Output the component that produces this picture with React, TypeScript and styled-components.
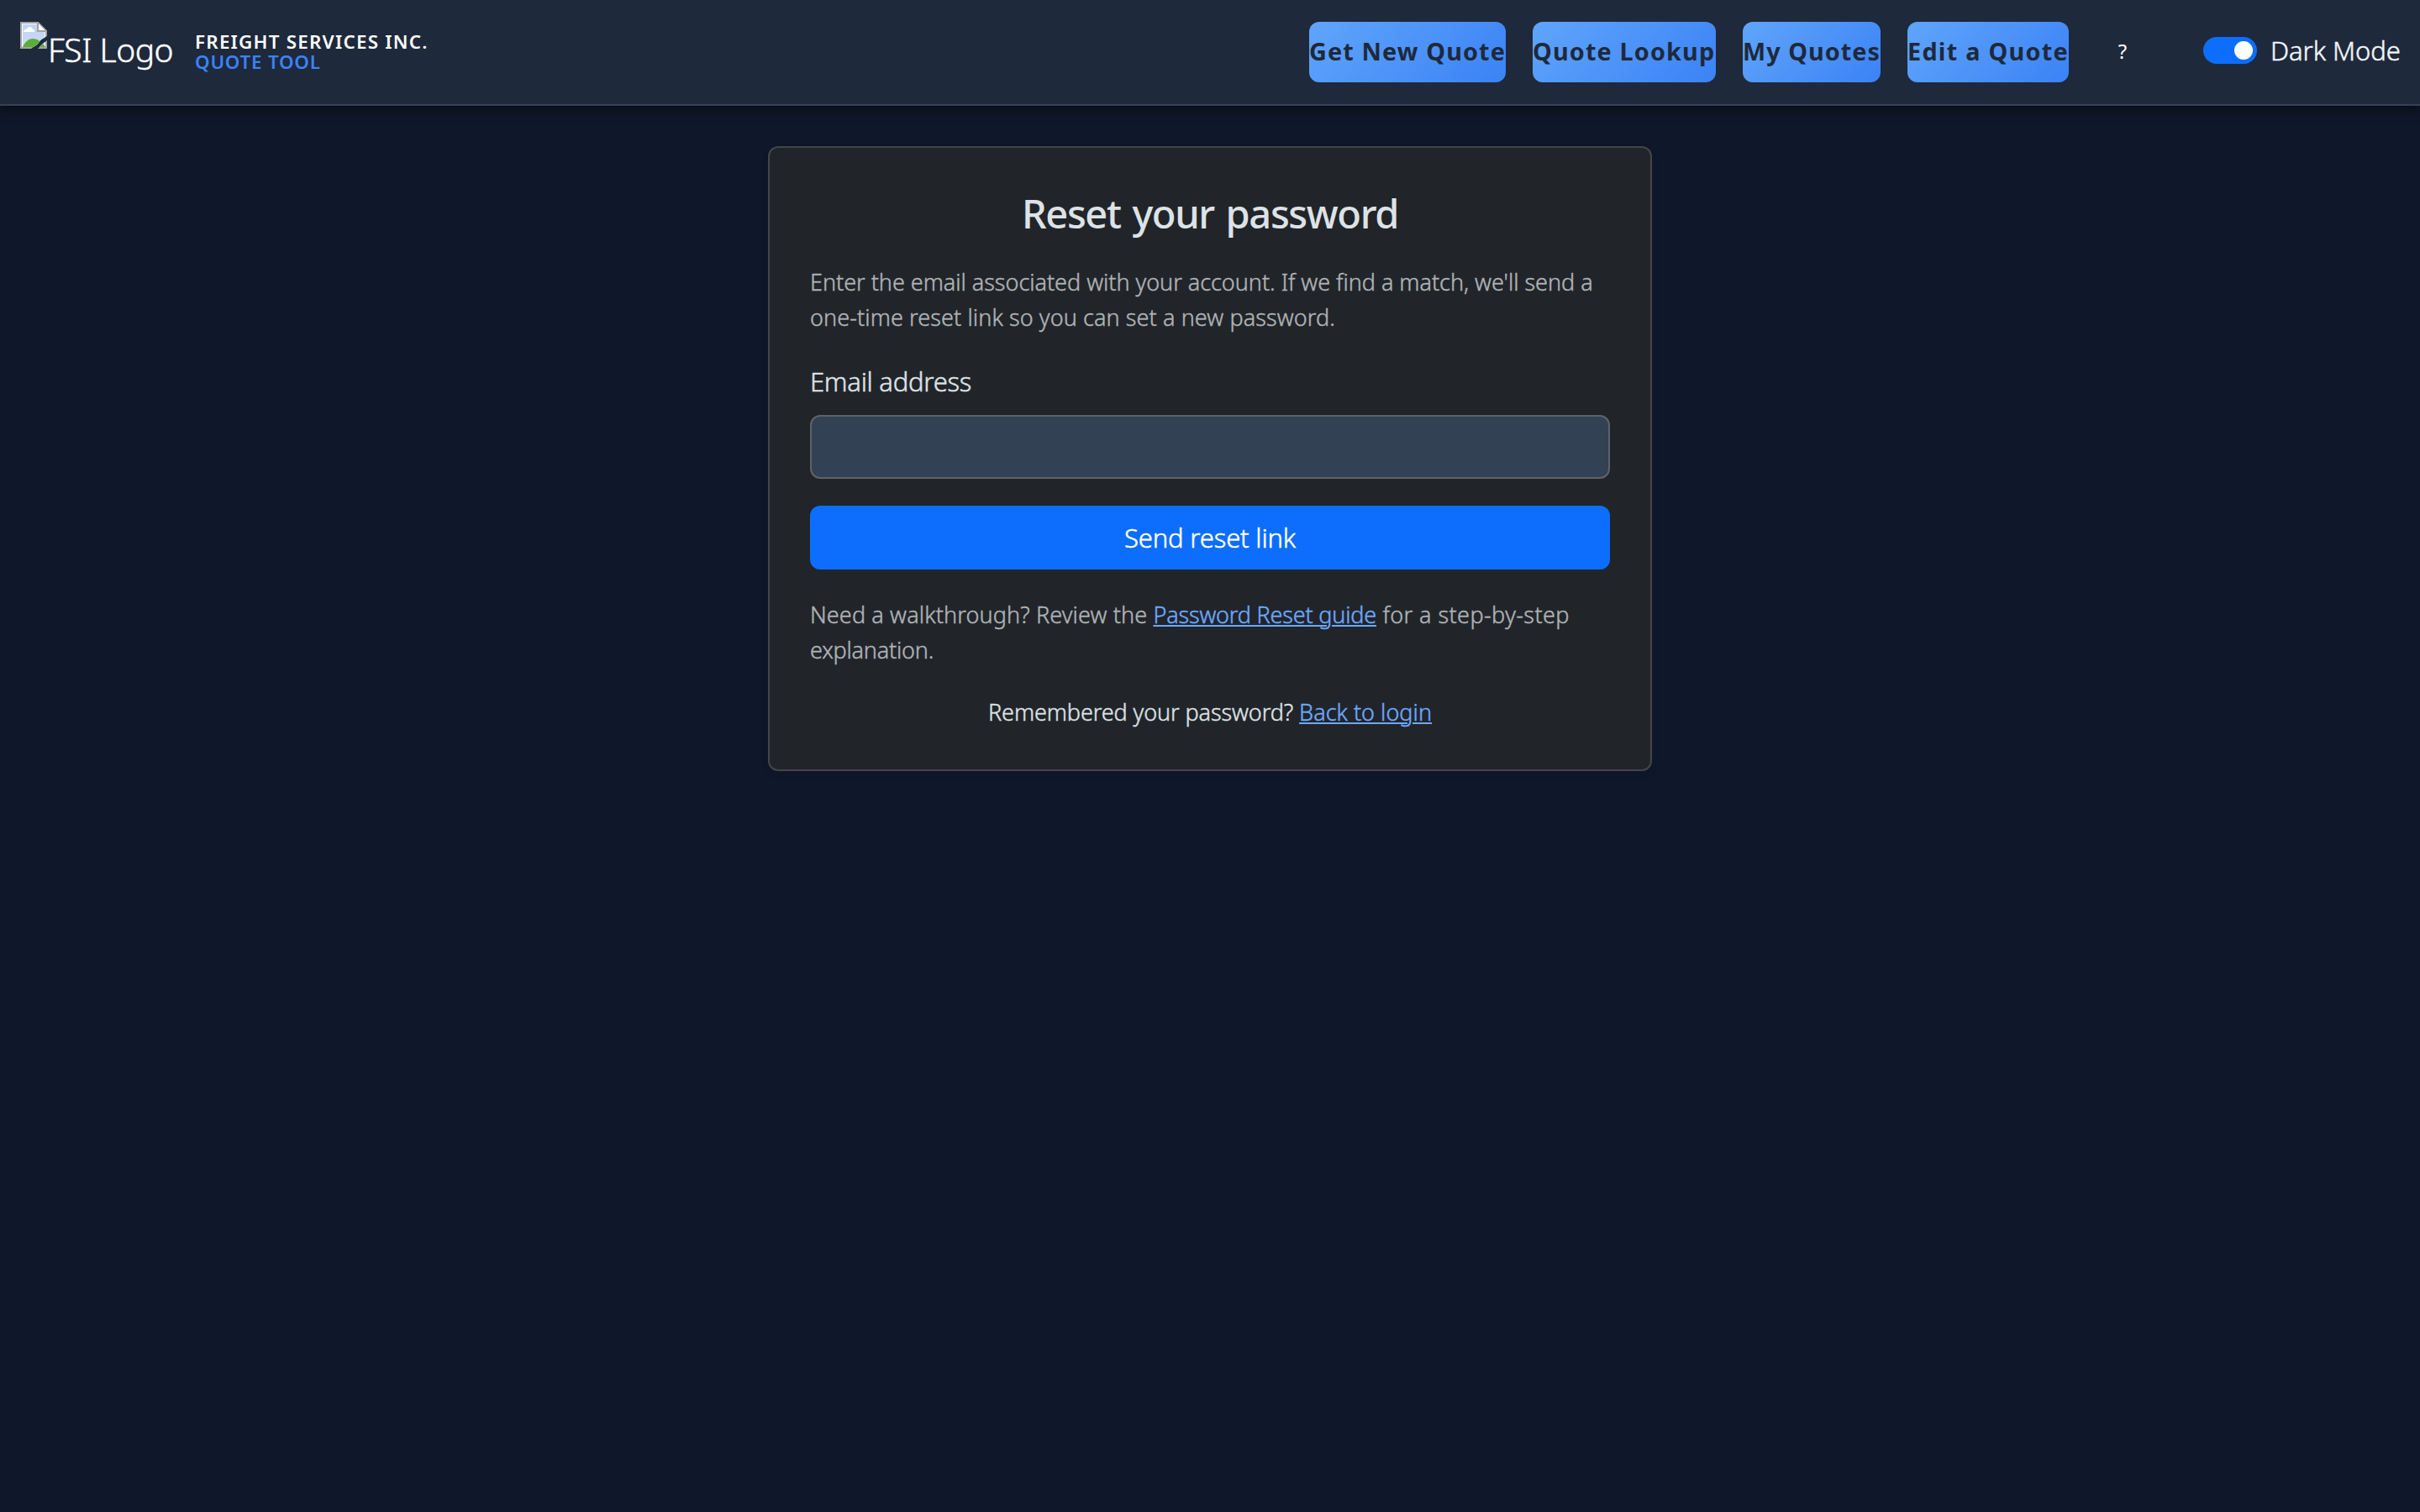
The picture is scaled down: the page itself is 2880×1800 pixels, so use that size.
import React from 'react';
import styled, { createGlobalStyle } from 'styled-components';

const GlobalStyle = createGlobalStyle`
  *, *::before, *::after { box-sizing: border-box; }
  body {
    margin: 0;
    min-height: 100vh;
    background: #0f172a;
    color: #dee2e6;
    font-family: "Noto Sans", "Open Sans", sans-serif;
    font-weight: 300;
    overflow: hidden;
  }
`;

const Header = styled.header`
  display: flex;
  align-items: flex-start;
  justify-content: space-between;
  height: 126px;
  padding: 26px 24px 0;
  background: #1e293b;
  border-bottom: 2px solid #334155;
  box-shadow: 0 4px 12px rgba(0, 0, 0, 0.6);
`;

const Brand = styled.a`
  display: flex;
  height: 72px;
  color: #fff;
`;

const LogoFallback = styled.span`
  display: flex;
  align-items: flex-start;
  width: 208px;
`;

const LogoAlt = styled.span`
  margin: 3px 0 0 1px;
  font-size: 39px;
  line-height: 60px;
  letter-spacing: -0.45px;
  white-space: nowrap;
  -webkit-text-stroke: 0.5px currentColor;
`;

const BrandText = styled.span`
  display: flex;
  flex-direction: column;
  padding-top: 12px;
  font-size: 22.4px;
  font-weight: 600;
  line-height: 24px;
  white-space: nowrap;
`;

const BrandLine = styled.span<{ $color: string; $track: number }>`
  color: ${p => p.$color};
  letter-spacing: ${p => p.$track}px;
`;

const Nav = styled.nav`
  display: flex;
  gap: 32px;
  height: 72px;
`;

const NavButton = styled.a<{ $width: number; $track: number }>`
  display: flex;
  align-items: center;
  width: ${p => p.$width}px;
  padding-bottom: 3px;
  border-radius: 12px;
  background: linear-gradient(135deg, #60a5fa, #3b82f6);
  color: #1e293b;
  font-size: 28.8px;
  font-weight: 700;
  letter-spacing: ${p => p.$track}px;
  white-space: nowrap;
`;

const HelpButton = styled.a`
  display: flex;
  align-items: center;
  justify-content: center;
  width: 64px;
  padding-bottom: 3px;
  color: #fff;
  font-size: 24px;
  font-weight: 400;
`;

const ThemeSwitch = styled.label`
  display: flex;
  align-items: center;
  gap: 16px;
  margin-left: 32px;
  height: 68px;
  color: #f1f5f9;
`;

const Track = styled.span`
  display: flex;
  align-items: center;
  justify-content: flex-end;
  width: 64px;
  height: 32px;
  padding-right: 5px;
  border-radius: 16px;
  background: #0d6efd;
`;

const Knob = styled.span`
  width: 22px;
  height: 22px;
  border-radius: 50%;
  background: #fff;
`;

const SwitchLabel = styled.span`
  width: 154px;
  font-size: 31px;
  letter-spacing: -0.04px;
  white-space: nowrap;
  -webkit-text-stroke: 0.5px currentColor;
`;

const Main = styled.main`
  display: flex;
  justify-content: center;
  padding-top: 48px;
`;

const Card = styled.section`
  display: flex;
  flex-direction: column;
  width: 1052px;
  height: 744px;
  padding: 48px;
  border: 2px solid #424649;
  border-radius: 12px;
  background: #212529;
  box-shadow: 0 4px 8px rgba(0, 0, 0, 0.075);
`;

const Title = styled.h1`
  margin: 0 0 32px;
  padding-top: 1px;
  font-size: 47px;
  font-weight: 500;
  line-height: 58px;
  letter-spacing: -1.38px;
  word-spacing: 3px;
  text-align: center;
`;

const Copy = styled.p<{ $muted?: boolean; $center?: boolean; $top?: number }>`
  margin: ${p => p.$top ?? 0}px 0 0;
  color: ${p => (p.$muted ? '#afb3b7' : '#dee2e6')};
  font-size: 27px;
  line-height: 42px;
  text-align: ${p => (p.$center ? 'center' : 'left')};
  white-space: nowrap;
  -webkit-text-stroke: 0.45px currentColor;
`;

const Run = styled.span<{ $track: number }>`
  letter-spacing: ${p => p.$track}px;
`;

const Link = styled.a<{ $track: number }>`
  color: #6ea8fe;
  letter-spacing: ${p => p.$track}px;
  text-decoration: underline;
  text-decoration-thickness: 2px;
  text-underline-offset: 2px;
`;

const Form = styled.form`
  display: flex;
  flex-direction: column;
  margin-top: 31px;
`;

const FieldLabel = styled.label`
  margin-bottom: 16px;
  font-size: 31px;
  line-height: 48px;
  letter-spacing: -0.27px;
  -webkit-text-stroke: 0.5px currentColor;
`;

const Field = styled.input`
  height: 76px;
  padding: 12px 24px;
  border: 2px solid #5f6368;
  border-radius: 12px;
  background: #334155;
  color: #dee2e6;
  font: inherit;
  outline: none;
`;

const Submit = styled.button`
  height: 76px;
  margin-top: 32px;
  padding: 0;
  border: 0;
  border-radius: 12px;
  background: #0d6efd;
  color: #fff;
  font-family: inherit;
  font-size: 31px;
  font-weight: 300;
  letter-spacing: -0.16px;
  -webkit-text-stroke: 0.5px currentColor;
`;

const BrokenImage = () => (
  <svg width="32" height="32" viewBox="0 0 32 32">
    <defs>
      <linearGradient id="sky" x1="0" y1="0" x2="0" y2="1">
        <stop offset="0" stopColor="#bfd3f5" />
        <stop offset="1" stopColor="#cbdaf6" />
      </linearGradient>
      <clipPath id="page">
        <path d="M0 0H22L32 10V17L25 21L20 27L13 32H0ZM32 22V32H21L26 27Z" />
      </clipPath>
    </defs>
    <g clipPath="url(#page)">
      <path d="M0 0H22L32 10V32H0Z" fill="#a3a3a3" />
      <path d="M2 2H20V12H30V30H2Z" fill="#fff" />
      <path d="M3 3H20V12H29V29H3Z" fill="url(#sky)" />
      <path d="M4 12C4 9 6 8 8 8.5C9 5 14 5 14.500 8.500C17 8.500 17.500 11 17 12Z" fill="#fff" />
      <path d="M3 30C6 23 11 20 15 20C21 20 26 24 30 30Z" fill="#5aae35" />
      <path d="M22 2.500V10H29.500Z" fill="#fff" />
    </g>
  </svg>
);

const navItems = [
  { text: 'Get New Quote', width: 234, track: 1.13 },
  { text: 'Quote Lookup', width: 218, track: 1.15 },
  { text: 'My Quotes', width: 164, track: 1.02 },
  { text: 'Edit a Quote', width: 192, track: 1.25 },
];

export default function App() {
  return (
    <>
      <GlobalStyle />
      <Header>
        <Brand>
          <LogoFallback>
            <BrokenImage />
            <LogoAlt>FSI Logo</LogoAlt>
          </LogoFallback>
          <BrandText>
            <BrandLine $color="#fff" $track={1.22}>FREIGHT SERVICES INC.</BrandLine>
            <BrandLine $color="#3b82f6" $track={0.76}>QUOTE TOOL</BrandLine>
          </BrandText>
        </Brand>
        <Nav>
          {navItems.map(item => (
            <NavButton key={item.text} $width={item.width} $track={item.track}>{item.text}</NavButton>
          ))}
          <HelpButton>?</HelpButton>
          <ThemeSwitch>
            <Track><Knob /></Track>
            <SwitchLabel>Dark Mode</SwitchLabel>
          </ThemeSwitch>
        </Nav>
      </Header>
      <Main>
        <Card>
          <Title>Reset your password</Title>
          <Copy $muted>
            <Run $track={-0.02}>Enter the email associated with your account. If we find a match, we'll send a</Run>
            <br />
            <Run $track={0.1}>one-time reset link so you can set a new password.</Run>
          </Copy>
          <Form>
            <FieldLabel htmlFor="email">Email address</FieldLabel>
            <Field id="email" type="email" />
            <Submit type="button">Send reset link</Submit>
          </Form>
          <Copy $muted $top={33}>
            <Run $track={0.135}>Need a walkthrough? Review the </Run>
            <Link $track={-0.187}>Password Reset guide</Link>
            <Run $track={0.42}> for a step-by-step</Run>
            <br />
            <Run $track={-0.21}>explanation.</Run>
          </Copy>
          <Copy $center $top={32}>
            <Run $track={-0.09}>Remembered your password? </Run>
            <Link $track={0.02}>Back to login</Link>
          </Copy>
        </Card>
      </Main>
    </>
  );
}
